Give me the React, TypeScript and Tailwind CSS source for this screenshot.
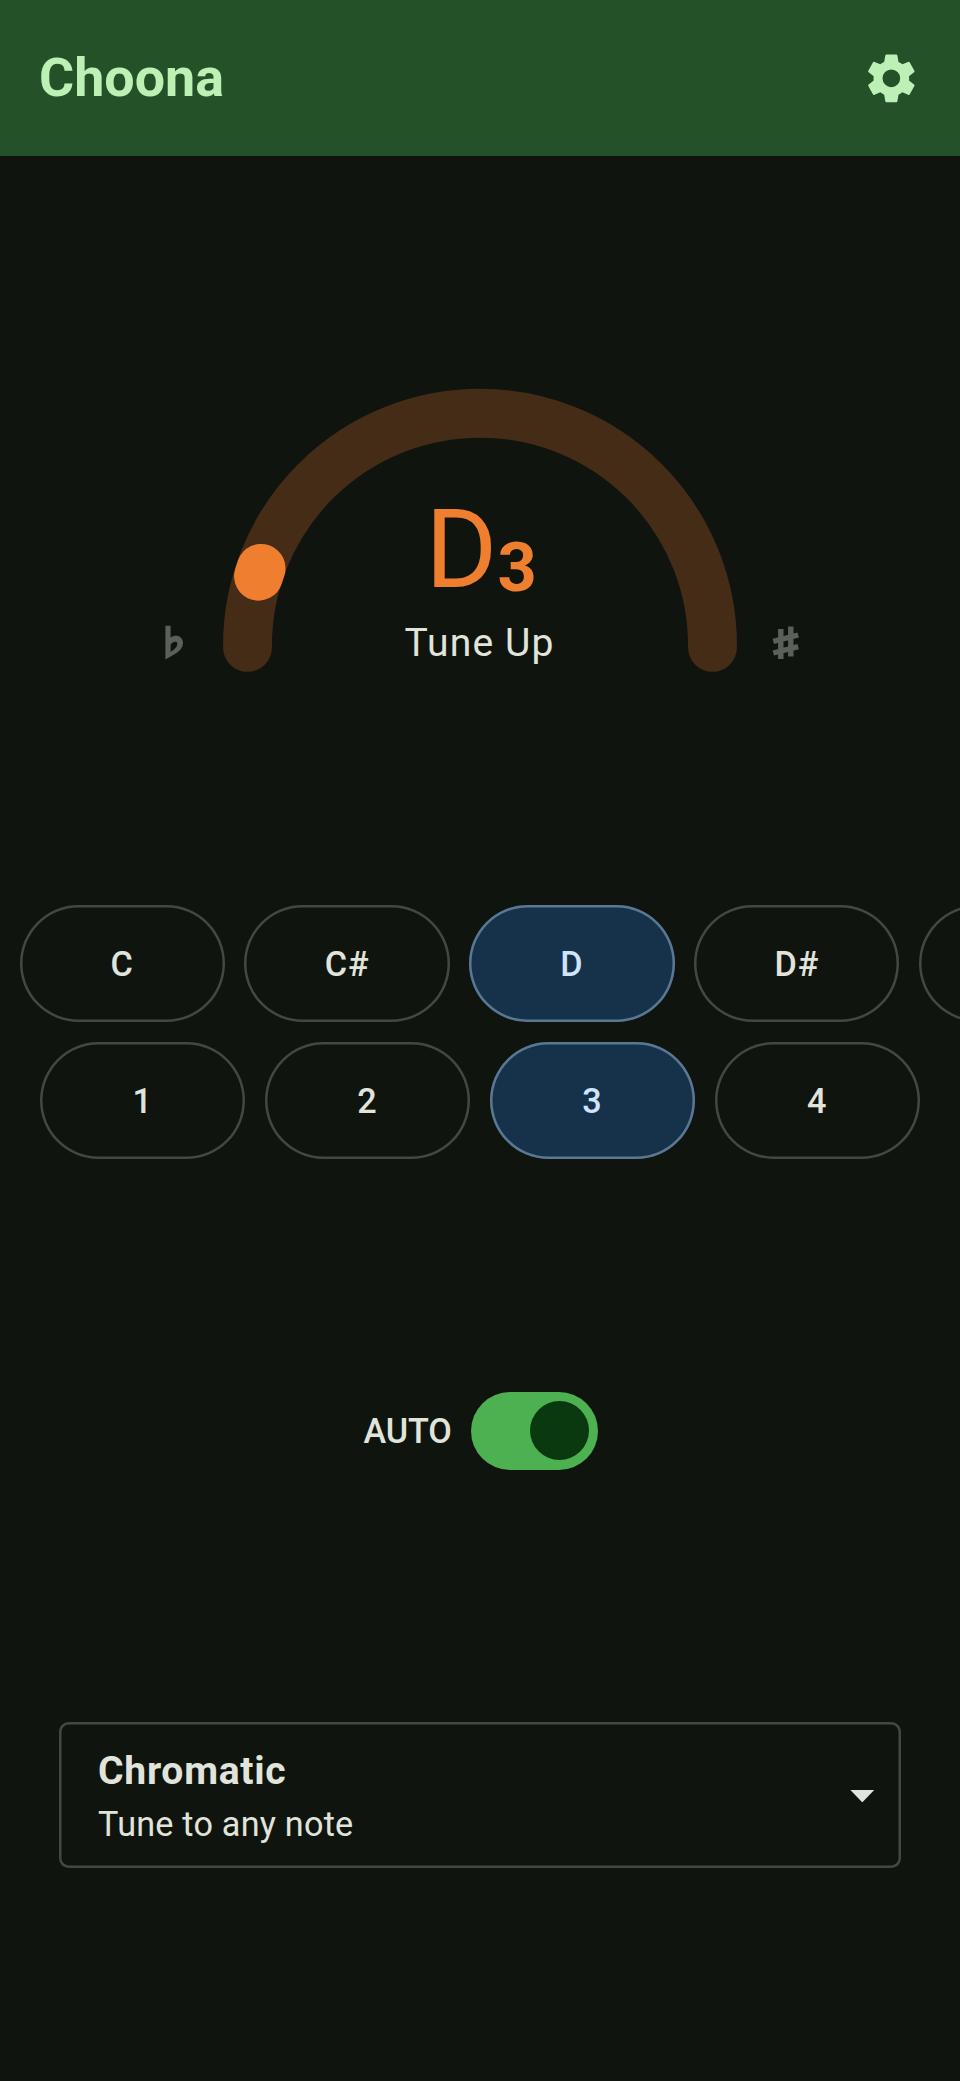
const notes = ["C", "C#", "D", "D#", ""];
const octaves = ["1", "2", "3", "4"];

function Pill({ label, selected }: { label: string; selected: boolean }) {
  return (
    <button
      className={
        "h-[117.4px] w-[205.2px] shrink-0 rounded-full pt-[2px] text-center text-[34.2px] font-medium tracking-[0.9px] " +
        (selected
          ? "bg-[#16324b] text-[#d0e4ff] shadow-[inset_0_0_0_2.5px_#5b7893]"
          : "text-[#e0e4db] shadow-[inset_0_0_0_2.5px_#434841]")
      }
    >
      {label}
    </button>
  );
}

function GearIcon() {
  return (
    <svg viewBox="-88 -88 176 176" className="size-[58.7px]" fill="currentColor">
      <path
        fillRule="evenodd"
        d="M-15.500 -71.500H15.500L18 -69.500L21.500 -49Q28 -46 33 -42L52 -50L54.500 -49L69.500 -22L69 -19L53 -6.500Q54 0 53 6.500L69 19L69.500 22L54.500 49L52 50L33 42Q28 46 21.500 49L18 69.500L15.500 71.500H-15.500L-18 69.500L-21.500 49Q-28 46 -33 42L-52 50L-54.500 49L-69.500 22L-69 19L-53 6.500Q-54 0 -53 -6.500L-69 -19L-69.500 -22L-54.500 -49L-52 -50L-33 -42Q-28 -46 -21.500 -49L-18 -69.500ZM0 -26.500A26.500 26.500 0 1 0 0 26.500A26.500 26.500 0 1 0 0 -26.500Z"
      />
    </svg>
  );
}

export default function App() {
  return (
    <div className="flex h-[2081px] w-[960px] flex-col overflow-hidden bg-[#10140f] font-['Roboto',sans-serif] text-[#e0e4db]">
      <header className="flex h-[156.4px] shrink-0 items-center justify-between bg-[#245127] pr-[39px] pl-[39px] text-[#bcf0b4]">
        <h1 className="text-[53.8px] leading-[68px] font-bold">Choona</h1>
        <GearIcon />
      </header>

      <main className="flex flex-1 flex-col">
        <section className="mt-[220px] grid h-[310px] shrink-0">
          <svg viewBox="0 0 960 310" className="col-start-1 row-start-1 h-[310px] w-[960px]" fill="none" strokeLinecap="round">
            <path d="M247.5 271.4V269.7A232.5 232.5 0 0 1 712.5 269.7V271.4" stroke="#452c17" strokeWidth="48.9" />
            <path d="M258.5 200.2A232.5 232.5 0 0 1 261.1 192.4" stroke="#ef7f2f" strokeWidth="48.9" />
            <path
              fill="#5c605a"
              fillRule="evenodd"
              d="M165.4 249.7H170.6V261.5C176 257.8 183 260.2 183 267C183 275 173.5 278.6 165.4 283.6ZM170.6 276V268.8C172.5 265.5 177.3 264.6 177.3 267.8C177.3 271.2 174 273.6 170.6 276Z"
            />
            <g stroke="#5c605a" strokeWidth="5.4" strokeLinecap="butt">
              <path d="M780.8 253V283M790.8 250.6V280.4M773.3 265.4L798.2 259M773.3 277L798.2 270.6" />
            </g>
          </svg>
          <div className="col-start-1 row-start-1 flex flex-col items-center pt-[109px]">
            <div className="flex items-baseline pl-[2px] text-[#ef7f2f]">
              <span className="text-[110px] leading-[130px]">D</span>
              <span className="relative top-[4px] text-[68.5px] leading-[80px] font-bold">3</span>
            </div>
            <p className="mt-[5px] pr-[1px] text-[39.1px] leading-[46px] tracking-[1.1px]">Tune Up</p>
          </div>
        </section>

        <section className="mt-[218.2px] flex flex-col gap-[19.6px]">
          <div className="flex gap-[19.7px] overflow-hidden pl-[19.6px]">
            {notes.map((n, i) => (
              <Pill key={i} label={n} selected={n === "D"} />
            ))}
          </div>
          <div className="flex gap-[19.7px] pl-[40px]">
            {octaves.map((o) => (
              <Pill key={o} label={o} selected={o === "3"} />
            ))}
          </div>
        </section>

        <section className="mt-[232.6px] flex items-center justify-center gap-[19.6px] pl-[2px]">
          <span className="text-[34.2px] leading-[48px] font-medium tracking-[-0.1px]">AUTO</span>
          <div className="flex h-[78.2px] w-[127.1px] items-center justify-end rounded-full bg-[#4db051] pr-[9.8px]">
            <div className="size-[58.7px] rounded-full bg-[#0a390f]" />
          </div>
        </section>

        <section className="mx-[58.8px] mt-[252px] flex h-[146.6px] shrink-0 items-center justify-between rounded-[9.8px] pt-[2px] pr-[26.5px] pl-[39.3px] shadow-[inset_0_0_0_2.5px_#434841]">
          <div>
            <h2 className="text-[39.1px] leading-[56px] font-bold tracking-[0.7px]">Chromatic</h2>
            <p className="text-[34.2px] leading-[50px] tracking-[0.22px]">Tune to any note</p>
          </div>
          <svg viewBox="0 0 25 13" className="h-[12.4px] w-[24.6px]">
            <path d="M0 0H25L12.5 13Z" fill="#e0e4db" />
          </svg>
        </section>
      </main>
    </div>
  );
}
